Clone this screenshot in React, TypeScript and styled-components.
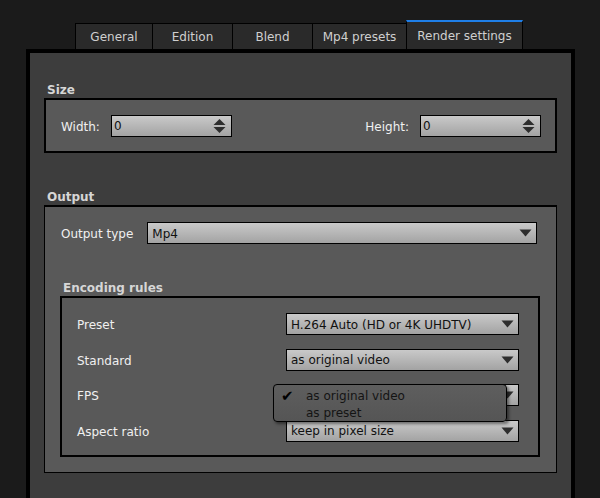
import React from "react";
import styled, { createGlobalStyle } from "styled-components";

const GlobalStyle = createGlobalStyle`
  html, body {
    margin: 0;
    padding: 0;
    background: #1b1b1b;
    overflow: hidden;
  }
  body {
    font-family: "DejaVu Sans", "Liberation Sans", sans-serif;
    font-size: 12px;
  }
  * { box-sizing: border-box; }
`;

const Page = styled.div`
  display: flex;
  flex-direction: column;
  height: 498px;
  overflow: hidden;
`;

const TabBar = styled.div`
  display: flex;
  align-items: flex-end;
  height: 29px;
  margin-top: 20px;
  padding-left: 75px;
`;

const Tab = styled.div<{ $w: number; $active?: boolean }>`
  width: ${(p) => p.$w}px;
  height: ${(p) => (p.$active ? 29 : 26)}px;
  margin-left: -1px;
  display: flex;
  align-items: center;
  justify-content: center;
  padding-top: 1px;
  background: #2a2a2a;
  border: 1px solid #000;
  border-bottom: none;
  border-top: ${(p) => (p.$active ? "2px solid #1f7fe8" : "1px solid #000")};
  color: #cfcfcf;
  font-size: 12px;
  white-space: nowrap;
  &:first-child { margin-left: 0; }
`;

const Panel = styled.div`
  margin-left: 26px;
  width: 549px;
  flex: 1 0 auto;
  min-height: 480px;
  background: #3d3d3d;
  border: 4px solid #000;
  padding: 29px 14px 40px 14px;
  display: flex;
  flex-direction: column;
`;

const SectionHeader = styled.div<{ $top?: number; $indent?: number }>`
  height: 16px;
  line-height: 17px;
  margin-top: ${(p) => p.$top ?? 0}px;
  padding-left: ${(p) => p.$indent ?? 3}px;
  font-weight: bold;
  font-size: 12px;
  color: #d6d6d6;
`;

const SizeBox = styled.div`
  height: 55px;
  background: #595959;
  border: 2px solid #000;
  padding: 0 14px 0 15px;
  display: flex;
  align-items: center;
  justify-content: space-between;
`;

const FieldGroup = styled.div`
  display: flex;
  align-items: center;
  gap: 11px;
`;

const Label = styled.span`
  color: #f0f0f0;
  font-size: 12px;
  padding-top: 2px;
  white-space: nowrap;
`;

const Field = styled.div<{ $w?: number }>`
  position: relative;
  height: 22px;
  width: ${(p) => (p.$w ? `${p.$w}px` : "auto")};
  flex: ${(p) => (p.$w ? "0 0 auto" : "1 1 auto")};
  border: 1px solid #000;
  background: linear-gradient(#c9c9c9, #a3a3a3);
  display: flex;
  align-items: center;
  justify-content: space-between;
  color: #111;
  font-size: 12px;
  white-space: nowrap;
`;

const FieldText = styled.span<{ $pad?: number }>`
  padding-left: ${(p) => p.$pad ?? 4}px;
  padding-top: 1px;
`;

const FieldIcon = styled.svg<{ $right: number }>`
  margin-right: ${(p) => p.$right}px;
  flex: 0 0 auto;
`;

const OutputBox = styled.div`
  background: #595959;
  border: 1px solid #000;
  border-top-width: 2px;
  padding: 15px 16px 15px 15px;
  display: flex;
  flex-direction: column;
`;

const OutputTypeRow = styled.div`
  display: flex;
  align-items: center;
  gap: 14px;
  padding: 0 3px 0 1px;
`;

const EncodingBox = styled.div`
  background: #595959;
  border: 2px solid #000;
  padding: 15px 19px 13.5px 15px;
  display: grid;
  grid-template-columns: 1fr 233px;
  grid-auto-rows: 22px;
  row-gap: 13.5px;
  align-items: center;
`;

const MenuAnchor = styled.div`
  position: relative;
  height: 22px;
  display: flex;
`;

const Menu = styled.div`
  position: absolute;
  left: -13px;
  top: 0;
  width: 234px;
  height: 38px;
  background: linear-gradient(#5e5e5e, #555555);
  border: 1px solid #000;
  border-radius: 4px;
  box-shadow: 2px 2px 3px rgba(0, 0, 0, 0.45);
  padding-top: 2px;
  z-index: 2;
`;

const MenuItem = styled.div`
  position: relative;
  height: 17px;
  line-height: 18px;
  padding-left: 32px;
  color: #141414;
  font-size: 12px;
  white-space: nowrap;
`;

const Check = styled.span`
  position: absolute;
  left: 7px;
  top: 0;
  font-size: 15px;
  font-weight: bold;
  color: #000;
`;

const DownArrow = () => (
  <FieldIcon $right={4} width="13" height="8" viewBox="0 0 13 8">
    <path d="M0.5 0.5 H12.5 L6.5 7.5 Z" fill="#2e2e2e" />
  </FieldIcon>
);

const Stepper = () => (
  <FieldIcon $right={5} width="13" height="16" viewBox="0 0 13 16">
    <path d="M6.5 1 L12.5 7 H0.5 Z" fill="#2e2e2e" />
    <path d="M0.5 9 H12.5 L6.5 15 Z" fill="#2e2e2e" />
  </FieldIcon>
);

const Select: React.FC<{ value?: string; w?: number }> = ({ value, w }) => (
  <Field $w={w}>
    <FieldText $pad={4}>{value}</FieldText>
    <DownArrow />
  </Field>
);

const NumberInput: React.FC<{ value: string }> = ({ value }) => (
  <Field $w={121}>
    <FieldText $pad={2}>{value}</FieldText>
    <Stepper />
  </Field>
);

const tabs = [
  { label: "General", w: 78 },
  { label: "Edition", w: 81 },
  { label: "Blend", w: 81 },
  { label: "Mp4 presets", w: 95 },
  { label: "Render settings", w: 117, active: true },
];

export default function App() {
  return (
    <Page>
      <GlobalStyle />
      <TabBar>
        {tabs.map((t) => (
          <Tab key={t.label} $w={t.w} $active={t.active}>
            {t.label}
          </Tab>
        ))}
      </TabBar>
      <Panel>
        <SectionHeader>Size</SectionHeader>
        <SizeBox>
          <FieldGroup>
            <Label>Width:</Label>
            <NumberInput value="0" />
          </FieldGroup>
          <FieldGroup>
            <Label>Height:</Label>
            <NumberInput value="0" />
          </FieldGroup>
        </SizeBox>

        <SectionHeader $top={36}>Output</SectionHeader>
        <OutputBox>
          <OutputTypeRow>
            <Label>Output type</Label>
            <Select value="Mp4" />
          </OutputTypeRow>

          <SectionHeader $top={36}>Encoding rules</SectionHeader>
          <EncodingBox>
            <Label>Preset</Label>
            <Select value="H.264 Auto (HD or 4K UHDTV)" />
            <Label>Standard</Label>
            <Select value="as original video" />
            <Label>FPS</Label>
            <MenuAnchor>
              <Select />
              <Menu>
                <MenuItem>
                  <Check>✔</Check>
                  as original video
                </MenuItem>
                <MenuItem>as preset</MenuItem>
              </Menu>
            </MenuAnchor>
            <Label>Aspect ratio</Label>
            <Select value="keep in pixel size" />
          </EncodingBox>
        </OutputBox>
      </Panel>
    </Page>
  );
}
